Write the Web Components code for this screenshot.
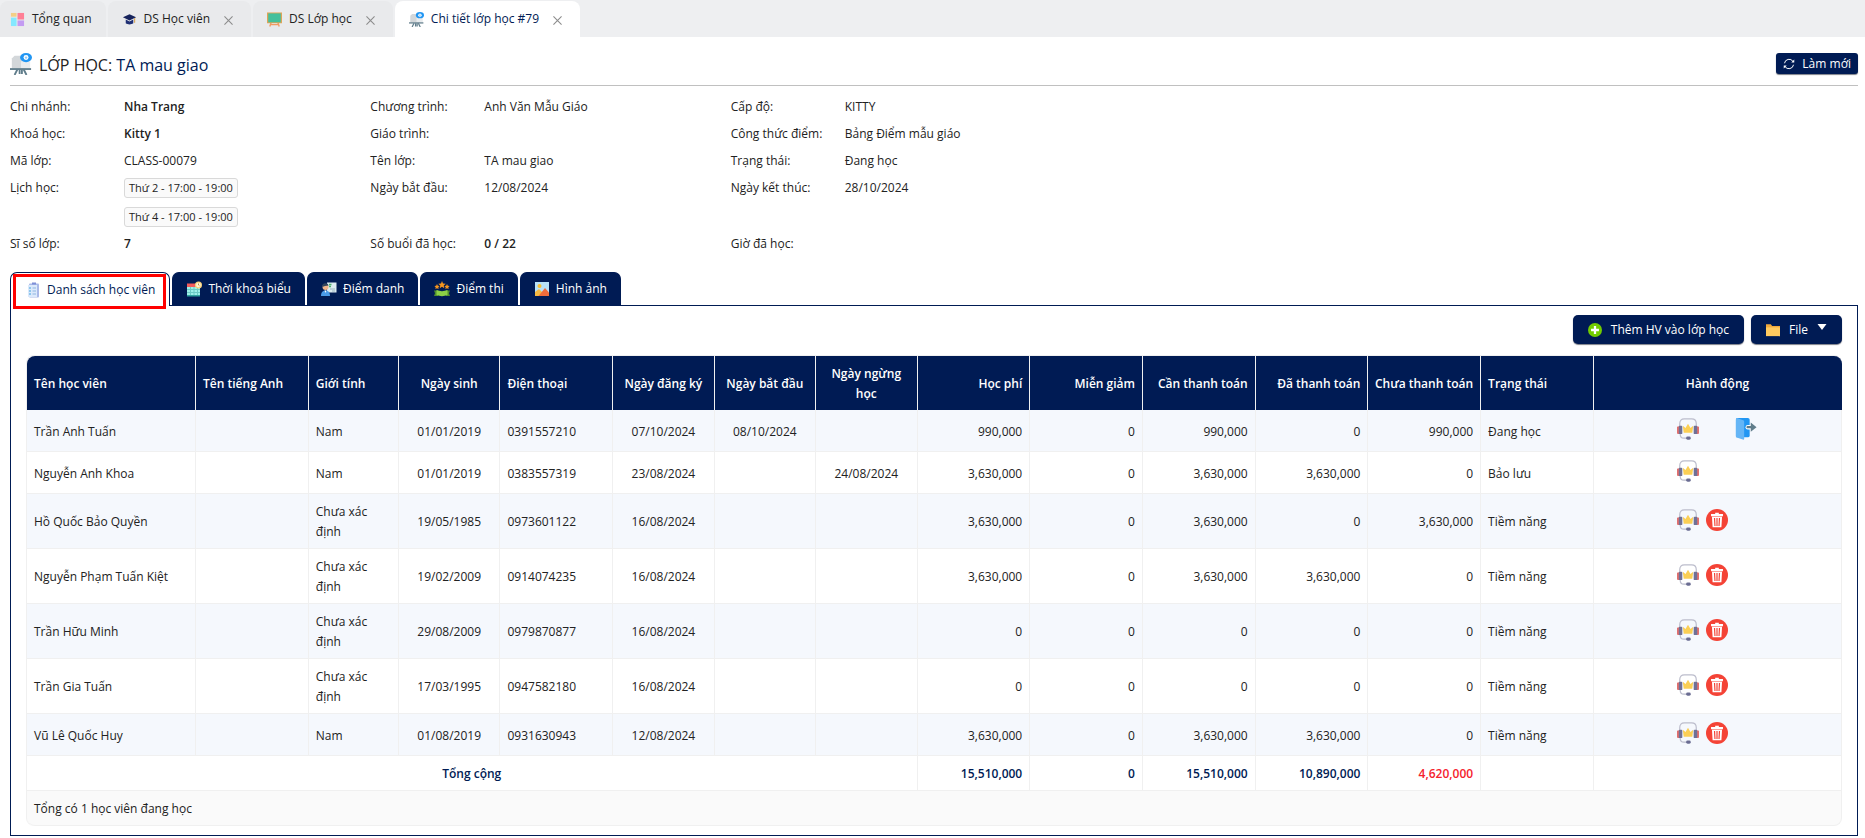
<!DOCTYPE html>
<html lang="vi">
<head>
<meta charset="utf-8">
<title>Chi tiết lớp học #79</title>
<style>
  body {
    margin: 0;
    background: #fff;
    color: #222;
    font: 12px/20px "Open Sans", "Noto Sans", sans-serif;
    --navy: #001b54;
    --line: #f0f0f0;
    --stripe: #f5f8fd;
  }
</style>
</head>
<body>
<class-page></class-page>

<script>
const ICONS = {
  dashboard: ['0 0 16 16', '<path fill="#f3cf86" d="M1 1h6v4H1z"/><path fill="#ff7f95" d="M8 1h7v7H8z"/><path fill="#84e8ff" d="M1 6h6v9H1z"/><path fill="#c39bf2" d="M8 9h7v6H8z"/>'],
  cap: ['0 0 16 16', '<path fill="#16235c" d="M8 2.500 1 5.600 8 9l7-3.400z"/><path fill="#1f2f74" d="M4 8v4c2 1.600 6 1.600 8 0V8L8 10z"/><path stroke="#d69a3c" stroke-width="1" fill="none" d="M13.500 6.500v5"/>'],
  board: ['0 0 16 16', '<path stroke="#f29b61" stroke-width="1.500" d="m4.500 11-1.500 4.500M11.500 11l1.500 4.500M3.500 13.500h9"/><path fill="#e0a458" d="M0 .5h16v11.500H0z"/><path fill="#45c09c" d="M1.300 1.500h13.400v9.500H1.300z"/>'],
  easel: ['0 0 24 24', '<path fill="#d3d7da" d="M5 3h12v14H2V6z"/><path fill="#e9ecee" d="M12 9h10v8H12z"/><path fill="#607d8b" d="M0 16.500h23v2H0z"/><path stroke="#607d8b" stroke-width="2" d="m8 18-3 6M10.500 18v5M15 18l3 6M13 18v5"/><ellipse cx="17.500" cy="5" rx="6.500" ry="5" fill="#2196f3"/><circle cx="17.500" cy="5" r="2.700" fill="#fff"/><circle cx="17.500" cy="5" r="1.300" fill="#90caf9"/>'],
  close: ['0 0 10 10', '<path stroke="#8c8c8c" stroke-width="1.200" d="m.5.5 9 9M9.500.5l-9 9"/>'],
  refresh: ['0 0 16 16', '<g fill="none" stroke="#fff" stroke-width="1.300"><path d="M2 7a6.200 6.200 0 0 1 11.300-2.500M14 9A6.200 6.200 0 0 1 2.700 11.500"/></g><path fill="#fff" d="M15 2v4h-4zM1 14v-4h4z"/>'],
  checklist: ['0 0 16 16', '<rect x="4" y="1.500" width="10" height="14" rx="1" fill="#a9b9e8"/><path fill="#dbe9fb" d="M3 3h9v12H3z"/><path fill="#7d8fd6" d="M7 .5h4v2H7z"/><path stroke="#42a5e0" stroke-width="1.200" d="M4 6h2M4 9h2M4 12h2"/><path stroke="#8fb5e0" d="M7.500 6H11M7.500 9H11M7.500 12H11"/>'],
  calendar: ['0 0 16 16', '<path fill="#9cf0e8" d="M1 5h13v10H1z"/><path fill="#f25b5b" d="M1 2.500h13V6H1z"/><path stroke="#3aa8a4" d="M1 8.500h13M1 11.500h13M4.500 6v9M8 6v9M11.500 6v9" opacity=".5"/><path fill="#2fa39e" d="M1 14h13v1.500H1z"/><circle cx="12.500" cy="4" r="3.500" fill="#f9d27a"/><circle cx="12.500" cy="4" r="2.300" fill="#fff4d6"/><path stroke="#a5742a" stroke-width=".8" fill="none" d="M12.500 2.500V4l1 .8"/>'],
  teacher: ['0 0 16 16', '<path fill="#dcebf0" d="M6 1.500h9.500v10H6z"/><path stroke="#4caf6a" stroke-width="1.300" d="M8 3.500h2.500M8 5.500h2"/><path stroke="#9bb4bf" d="M9 8h5M11 10h3"/><circle cx="4.500" cy="6" r="3" fill="#f0b48a"/><path fill="#30435c" d="M1.300 6a3.300 3.300 0 0 1 6.400-1.500L4 5z"/><path fill="#4a9be8" d="M0 15c0-4 2-5.500 4.500-5.500S9 11 9 15z"/><path fill="#fff" d="m3.500 9.500 1 2.500 1-2.500z"/>'],
  stars: ['0 0 16 16', '<g fill="#f7961e"><path d="m8 0 1 2.600 2.700.2L9.700 4.500l.6 2.700L8 5.800 5.700 7.200l.6-2.700-2-1.700L7 2.600z"/><path d="m3 3 .8 1.700 1.800.2-1.300 1.300.3 1.900L3 7.200l-1.600.9.3-1.900L.4 4.900l1.800-.2zM13 3l.8 1.700 1.800.2-1.300 1.300.3 1.900-1.600-.9-1.600.9.3-1.900-1.300-1.300 1.800-.2z"/></g><path fill="#4f8f2c" d="M0 9.500h4V15H0l1-2.700zM16 9.500h-4V15h4l-1-2.700z"/><path fill="#8bd046" d="M2.500 9c3.500 1.500 7.500 1.500 11 0v5c-3.500 1.500-7.500 1.500-11 0z"/>'],
  image: ['0 0 16 16', '<path fill="#b8e2f8" d="M1 1h14v14H1z"/><circle cx="5.500" cy="5" r="2" fill="#fcc02e"/><path fill="#f5b942" d="m1 11 4-3 7 7H1z"/><path fill="#ef6c3c" d="m4.500 15 6.500-8 4 4.500V15z"/>'],
  add: ['0 0 16 16', '<circle cx="8" cy="8" r="8" fill="#72cc00"/><path fill="#fff" d="M6.700 3.500h2.600v3.200h3.200v2.600H9.300v3.200H6.700V9.300H3.500V6.700h3.200z"/>'],
  folder: ['0 0 16 16', '<path fill="#f0a93c" d="M0 1.500h5.500L7 3.500h9v5H0z"/><path fill="#ffca5f" d="M0 5h16v10H0z"/>'],
  caret: ['0 0 10 6', '<path fill="#fff" d="M.5 0h9L5 6z"/>'],
  headset: ['0 0 24 24', '<path fill="none" stroke="#bcbdcc" stroke-width="1.300" d="M3 9V6q0-5 5-5h8q5 0 5 5v3"/><path fill="none" stroke="#bcbdcc" stroke-width="1.300" d="M3.500 17v1q0 4 4 4H11"/><path fill="#e0706f" d="M2.500 9a4 4 0 0 0 0 8.500zM21.500 9a4 4 0 0 1 0 8.500z"/><rect x="2" y="8.500" width="3.800" height="9" rx="1" fill="#6f7196"/><rect x="18.200" y="8.500" width="3.800" height="9" rx="1" fill="#6f7196"/><rect x="10" y="20.300" width="5" height="3.500" rx="1.600" fill="#6a6c92"/><path fill="#fbcf55" d="m6.300 8.500 3 2.500L12 6.200l2.700 4.800 3-2.500-1 7.700H7.300z"/>'],
  exit: ['0 0 24 24', '<rect x="1" y="0" width="15" height="21" rx="2" fill="#2196f3"/><path fill="#64b5f6" d="M1 1q0-1 1-1l7 2.500q1 .4 1 1.500v18.500q0 1.500-1.500 1L1 21z"/><path stroke="#fff" stroke-width="5" stroke-linecap="round" d="M14 10h3"/><path fill="#607d8b" d="M13 8.700h4.200V5L23.500 10l-6.300 5v-3.700H13q-1.200-1.300 0-2.600z"/>'],
  trash: ['0 0 24 24', '<circle cx="12" cy="12" r="12" fill="#f44336"/><path fill="#fff" d="M10 4h4v1.500h4.500v2.300h-13V5.500H10zM6.500 8.500h11l-.7 11.500H7.200z"/><path stroke="#f44336" stroke-width="1.300" d="m9.300 9.800.5 8.700M12 9.800v8.700M14.700 9.800l-.5 8.700"/>']
};

class UiIcon extends HTMLElement {
  connectedCallback() {
    if (this.shadowRoot) return;
    const [box, art] = ICONS[this.getAttribute('name')];
    this.attachShadow({ mode: 'open' }).innerHTML = `
      <style>
        :host { display: inline-block; flex: none; width: 16px; height: 16px; }
        svg { display: block; width: 100%; height: 100%; }
      </style>
      <svg viewBox="${box}" aria-hidden="true">${art}</svg>`;
  }
}
customElements.define('ui-icon', UiIcon);

class PageTab extends HTMLElement {
  connectedCallback() {
    this.attachShadow({ mode: 'open' }).innerHTML = `
      <style>
        :host { display: flex; align-items: center; padding: 0 18px 0 14px; background: #e9eaec; border-radius: 8px 8px 0 0; }
        :host([pinned]) { padding: 0 14px 0 10px; }
        :host([active]) { background: #fff; color: var(--navy); font-weight: 500; }
        a { display: flex; align-items: center; gap: 7px; color: inherit; text-decoration: none; white-space: nowrap; }
        a ui-icon { width: 15px; height: 15px; }
        button { display: block; margin: 2px 0 0 14px; padding: 0; border: 0; background: none; line-height: 0; }
        button ui-icon { width: 9px; height: 9px; }
      </style>
      <a href="#"><ui-icon name="${this.getAttribute('icon')}"></ui-icon><span><slot></slot></span></a>
      ${this.hasAttribute('pinned') ? '' : '<button type="button" aria-label="Đóng"><ui-icon name="close"></ui-icon></button>'}`;
  }
}
customElements.define('page-tab', PageTab);

class NavyButton extends HTMLElement {
  connectedCallback() {
    this.attachShadow({ mode: 'open' }).innerHTML = `
      <style>
        :host { display: inline-block; }
        button { display: flex; align-items: center; gap: 9px; height: 29px; padding: 0 15px; border: 0; border-radius: 5px;
                 background: var(--navy); color: #fff; font: inherit; white-space: nowrap; box-shadow: 0 1px 1px #7c7f88; }
        :host([small]) button { gap: 7px; height: 21px; padding: 0 7px; border-radius: 3px; }
        :host([small]) ui-icon { width: 12px; height: 12px; }
        ui-icon { width: 14px; height: 14px; }
        .caret { width: 10px; height: 6px; margin-bottom: 6px; }
      </style>
      <button type="button">
        <ui-icon name="${this.getAttribute('icon')}"></ui-icon><span><slot></slot></span>
        ${this.hasAttribute('menu') ? '<ui-icon class="caret" name="caret"></ui-icon>' : ''}
      </button>`;
  }
}
customElements.define('navy-button', NavyButton);

class SchedTag extends HTMLElement {
  connectedCallback() {
    this.attachShadow({ mode: 'open' }).innerHTML = `
      <style>
        :host { display: block; box-sizing: border-box; height: 20px; padding: 0 4px; border: 1px solid #d9d9d9; border-radius: 3px;
                background: #fafafa; font-size: 11px; line-height: 18px; white-space: nowrap; }
      </style><slot></slot>`;
  }
}
customElements.define('sched-tag', SchedTag);

class ClassInfo extends HTMLElement {
  connectedCallback() {
    const items = [
      ['Chi nhánh:', '<b>Nha Trang</b>'], ['Chương trình:', 'Anh Văn Mẫu Giáo'], ['Cấp độ:', 'KITTY'],
      ['Khoá học:', '<b>Kitty 1</b>'], ['Giáo trình:', ''], ['Công thức điểm:', 'Bảng Điểm mẫu giáo'],
      ['Mã lớp:', 'CLASS-00079'], ['Tên lớp:', 'TA mau giao'], ['Trạng thái:', 'Đang học'],
      ['Lịch học:', '<sched-tag>Thứ 2 - 17:00 - 19:00</sched-tag><sched-tag>Thứ 4 - 17:00 - 19:00</sched-tag>'],
      ['Ngày bắt đầu:', '12/08/2024'], ['Ngày kết thúc:', '28/10/2024'],
      ['Sĩ số lớp:', '<b>7</b>'], ['Số buổi đã học:', '<b>0 / 22</b>'], ['Giờ đã học:', '']
    ];
    this.attachShadow({ mode: 'open' }).innerHTML = `
      <style>
        :host { display: block; }
        dl { display: grid; grid-template-columns: repeat(3, 19.5%); row-gap: 7px; margin: 0; }
        div { display: grid; grid-template-columns: 114px 1fr; }
        dd { display: grid; gap: 9px; justify-content: start; align-content: start; margin: 0; white-space: nowrap; }
        b { font-weight: 600; }
      </style>
      <dl>${items.map(([k, v]) => `<div><dt>${k}</dt><dd>${v}</dd></div>`).join('')}</dl>`;
  }
}
customElements.define('class-info', ClassInfo);

class SectionTabs extends HTMLElement {
  connectedCallback() {
    const tabs = [['checklist', 'Danh sách học viên'], ['calendar', 'Thời khoá biểu'], ['teacher', 'Điểm danh'], ['stars', 'Điểm thi'], ['image', 'Hình ảnh']];
    this.attachShadow({ mode: 'open' }).innerHTML = `
      <style>
        :host { display: flex; gap: 2px; }
        button { position: relative; box-sizing: border-box; display: flex; align-items: center; gap: 6px; height: 33px; padding: 0 13px;
                 border: 1px solid var(--navy); border-bottom: 0; border-radius: 7px 7px 0 0;
                 background: var(--navy); color: #fff; font: inherit; white-space: nowrap; }
        button[aria-selected="true"] { height: 34px; margin-bottom: -1px; padding: 0 14px; background: #fff; color: var(--navy); }
        button[aria-selected="true"]::after { content: ""; position: absolute; inset: 1px 3px -3px 2px; border: 3px solid #f00; }
      </style>
      ${tabs.map(([i, t], n) => `<button type="button" role="tab" aria-selected="${n === 0}"><ui-icon name="${i}"></ui-icon>${t}</button>`).join('')}`;
    this.setAttribute('role', 'tablist');
  }
}
customElements.define('section-tabs', SectionTabs);

class StudentTable extends HTMLElement {
  connectedCallback() {
    const cols = [
      ['Tên học viên', 150, ''], ['Tên tiếng Anh', 100, ''], ['Giới tính', 80, ''], ['Ngày sinh', 90, 'c'], ['Điện thoại', 100, ''],
      ['Ngày đăng ký', 90, 'c'], ['Ngày bắt đầu', 90, 'c'], ['Ngày ngừng học', 90, 'c'], ['Học phí', 100, 'r'], ['Miễn giảm', 100, 'r'],
      ['Cần thanh toán', 100, 'r'], ['Đã thanh toán', 100, 'r'], ['Chưa thanh toán', 100, 'r'], ['Trạng thái', 100, ''], ['Hành động', 220, 'c']
    ];
    const unknown = 'Chưa xác định';
    const rows = [
      ['Trần Anh Tuấn', '', 'Nam', '01/01/2019', '0391557210', '07/10/2024', '08/10/2024', '', '990,000', '0', '990,000', '0', '990,000', 'Đang học', 'exit'],
      ['Nguyễn Anh Khoa', '', 'Nam', '01/01/2019', '0383557319', '23/08/2024', '', '24/08/2024', '3,630,000', '0', '3,630,000', '3,630,000', '0', 'Bảo lưu', ''],
      ['Hồ Quốc Bảo Quyền', '', unknown, '19/05/1985', '0973601122', '16/08/2024', '', '', '3,630,000', '0', '3,630,000', '0', '3,630,000', 'Tiềm năng', 'trash'],
      ['Nguyễn Phạm Tuấn Kiệt', '', unknown, '19/02/2009', '0914074235', '16/08/2024', '', '', '3,630,000', '0', '3,630,000', '3,630,000', '0', 'Tiềm năng', 'trash'],
      ['Trần Hữu Minh', '', unknown, '29/08/2009', '0979870877', '16/08/2024', '', '', '0', '0', '0', '0', '0', 'Tiềm năng', 'trash'],
      ['Trần Gia Tuấn', '', unknown, '17/03/1995', '0947582180', '16/08/2024', '', '', '0', '0', '0', '0', '0', 'Tiềm năng', 'trash'],
      ['Vũ Lê Quốc Huy', '', 'Nam', '01/08/2019', '0931630943', '12/08/2024', '', '', '3,630,000', '0', '3,630,000', '3,630,000', '0', 'Tiềm năng', 'trash']
    ];
    const act = (name, label) => `<button type="button" class="${name}" aria-label="${label}"><ui-icon name="${name}"></ui-icon></button>`;
    const labels = { exit: 'Chuyển lớp', trash: 'Xoá' };
    const actions = extra => `<div class="acts">${act('headset', 'Chăm sóc')}${extra ? act(extra, labels[extra]) : ''}</div>`;
    this.attachShadow({ mode: 'open' }).innerHTML = `
      <style>
        :host { display: block; }
        table { width: 100%; table-layout: fixed; border-collapse: separate; border-spacing: 0; border: solid var(--line);
                border-width: 1px 0 0 1px; border-radius: 8px; }
        th, td { padding: 8px 7px 6px; border: solid var(--line); border-width: 0 1px 1px 0; text-align: left; font-weight: 400; }
        thead th { height: 40px; background: var(--navy); color: #fff; font-weight: 600; border-bottom: 0; }
        thead th:last-child { border-color: var(--navy); border-top-right-radius: 8px; }
        thead th:first-child { border-top-left-radius: 8px; }
        tbody td { height: 27px; }
        tbody tr:nth-child(odd) td { background: var(--stripe); }
        .c { text-align: center; }
        .r { text-align: right; padding-left: 2px; }
        .gender { padding-right: 24px; }
        .acts { display: grid; grid-template-columns: repeat(3, 22px); gap: 7px; justify-content: center; margin-bottom: 5px; }
        .acts button { padding: 0; border: 0; background: none; line-height: 0; }
        .acts ui-icon { width: 22px; height: 22px; }
        .exit { grid-column: 3; }
        .total { color: var(--navy); }
        .total th, .total td { font-weight: 600; }
        .total .c { text-align: center; }
        .total .due { color: #f5222d; }
        .note td { background: #fafafa; border-radius: 0 0 8px 8px; }
      </style>
      <table>
        <colgroup>${cols.map(c => `<col style="width:${c[1]}px">`).join('')}</colgroup>
        <thead><tr>${cols.map(c => `<th scope="col" class="${c[2]}">${c[0]}</th>`).join('')}</tr></thead>
        <tbody>${rows.map(r => `<tr>${r.map((v, i) => `<td class="${i === 2 ? 'gender' : cols[i][2]}">${i === 14 ? actions(v) : v}</td>`).join('')}</tr>`).join('')}</tbody>
        <tfoot>
          <tr class="total"><th scope="row" colspan="8" class="c">Tổng cộng</th><td class="r">15,510,000</td><td class="r">0</td><td class="r">15,510,000</td><td class="r">10,890,000</td><td class="r due">4,620,000</td><td></td><td></td></tr>
          <tr class="note"><td colspan="15">Tổng có 1 học viên đang học</td></tr>
        </tfoot>
      </table>`;
  }
}
customElements.define('student-table', StudentTable);

class ClassPage extends HTMLElement {
  connectedCallback() {
    this.attachShadow({ mode: 'open' }).innerHTML = `
      <style>
        :host { display: block; }
        nav { display: flex; gap: 2px; height: 36px; padding-top: 1px; background: #eeeff1; }
        main { padding: 0 7px 2px 10px; }
        header { display: flex; align-items: center; height: 48px; border-bottom: 1px solid #c0c0c0; }
        header ui-icon { width: 22px; height: 22px; margin: 6px 7px 0 0; }
        h1 { flex: 1; margin: 8px 0 0; font-size: 16px; line-height: 24px; font-weight: 500; }
        h1 span { color: var(--navy); }
        header navy-button { margin-top: 5px; }
        class-info { padding: 11px 0 18px; }
        section { border: 1px solid var(--navy); padding: 9px 15px; }
        .tools { display: flex; justify-content: flex-end; gap: 7px; margin-bottom: 11px; }
      </style>
      <nav>
        <page-tab icon="dashboard" pinned>Tổng quan</page-tab>
        <page-tab icon="cap">DS Học viên</page-tab>
        <page-tab icon="board">DS Lớp học</page-tab>
        <page-tab icon="easel" active>Chi tiết lớp học #79</page-tab>
      </nav>
      <main>
        <header>
          <ui-icon name="easel"></ui-icon>
          <h1>LỚP HỌC: <span>TA mau giao</span></h1>
          <navy-button icon="refresh" small>Làm mới</navy-button>
        </header>
        <class-info></class-info>
        <section-tabs></section-tabs>
        <section>
          <div class="tools">
            <navy-button icon="add">Thêm HV vào lớp học</navy-button>
            <navy-button icon="folder" menu>File</navy-button>
          </div>
          <student-table></student-table>
        </section>
      </main>`;
  }
}
customElements.define('class-page', ClassPage);
</script>
</body>
</html>
